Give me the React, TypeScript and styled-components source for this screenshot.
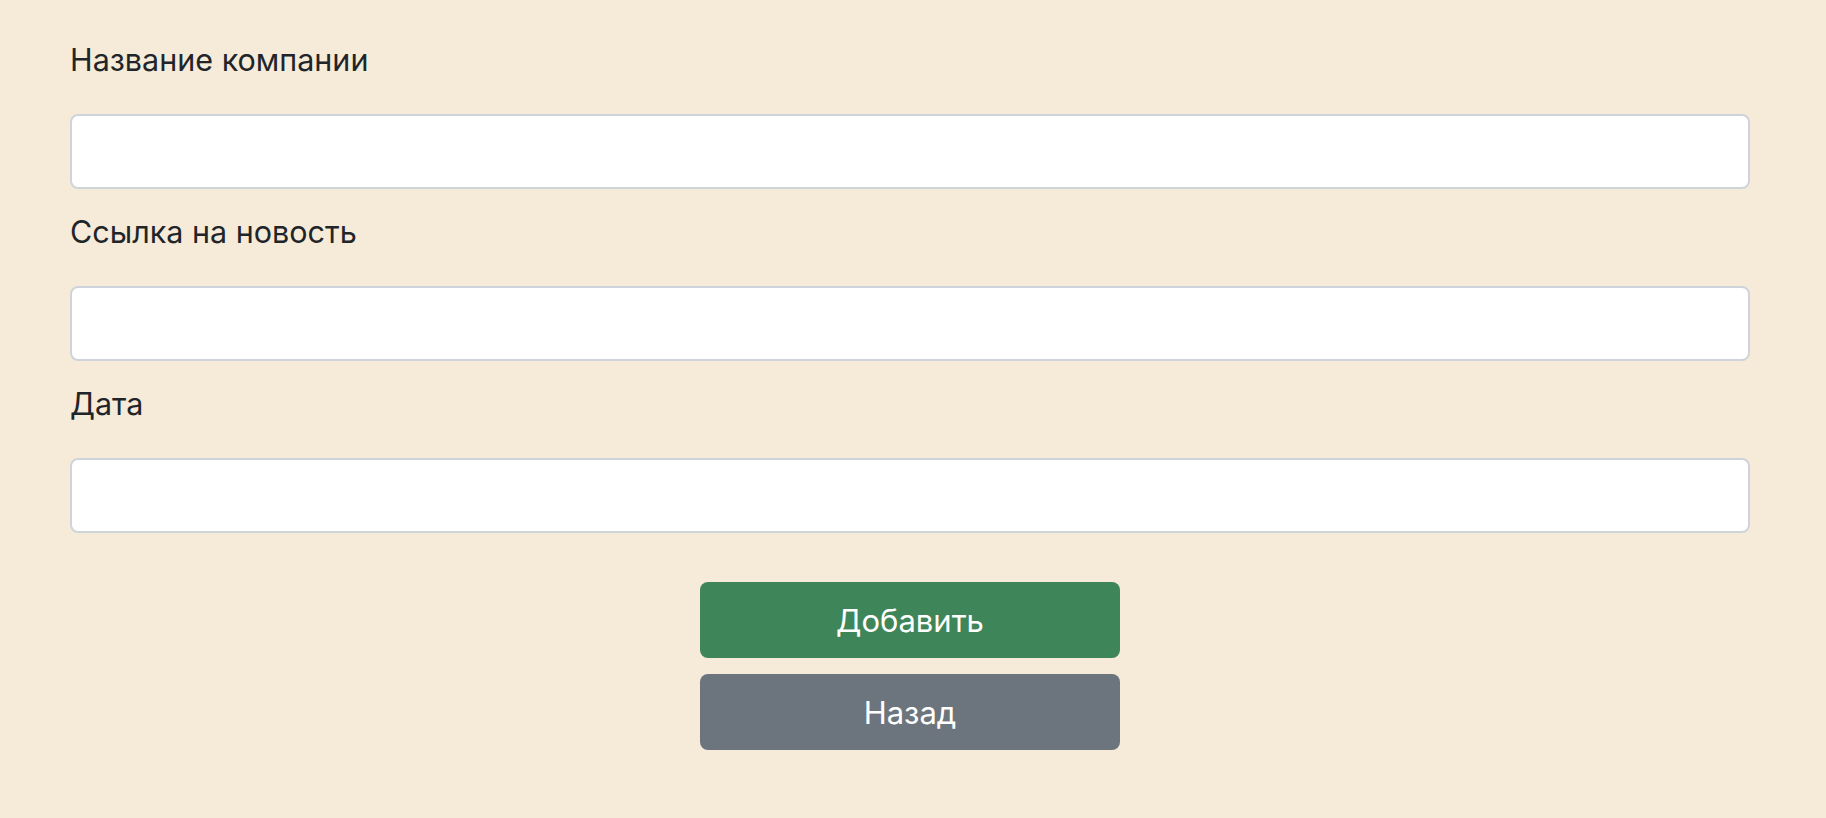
import React from "react";
import styled, { createGlobalStyle } from "styled-components";

const Global = createGlobalStyle`
  html, body { margin: 0; padding: 0; background: #f6ebd9; }
  body { font-family: Inter, "Noto Sans", sans-serif; color: #212529; }
  * { box-sizing: border-box; }
`;

const Page = styled.div`
  height: 818px;
  overflow: hidden;
  background: #f6ebd9;
  padding: 36px 77px 0 70px;
`;

const Form = styled.form`
  display: flex;
  flex-direction: column;
  width: 1680px;
`;

const Field = styled.div`
  display: flex;
  flex-direction: column;
  margin-bottom: 19px;
`;

const Label = styled.label`
  font-size: 30.5px;
  line-height: 48px;
  margin-bottom: 30px;
  color: #212529;
`;

const Input = styled.input`
  height: 75px;
  width: 100%;
  border: 2px solid #ced4da;
  border-radius: 8px;
  background: #fff;
  font: inherit;
  font-size: 32px;
  padding: 0 24px;
  outline: none;
`;

const Actions = styled.div`
  display: flex;
  flex-direction: column;
  align-items: center;
  gap: 16px;
  margin-top: 30px;
`;

const Button = styled.button<{ $variant: "success" | "secondary" }>`
  width: 420px;
  height: 76px;
  border: none;
  border-radius: 8px;
  color: #fff;
  font-family: Inter, "Noto Sans", sans-serif;
  font-size: 31px;
  background: ${(p) => (p.$variant === "success" ? "#3e8659" : "#6c757d")};
  cursor: pointer;
`;

export default function App() {
  return (
    <Page>
      <Global />
      <Form onSubmit={(e) => e.preventDefault()}>
        <Field>
          <Label>Название компании</Label>
          <Input type="text" />
        </Field>
        <Field>
          <Label>Ссылка на новость</Label>
          <Input type="text" />
        </Field>
        <Field>
          <Label>Дата</Label>
          <Input type="text" />
        </Field>
        <Actions>
          <Button $variant="success" type="submit">Добавить</Button>
          <Button $variant="secondary" type="button">Назад</Button>
        </Actions>
      </Form>
    </Page>
  );
}
